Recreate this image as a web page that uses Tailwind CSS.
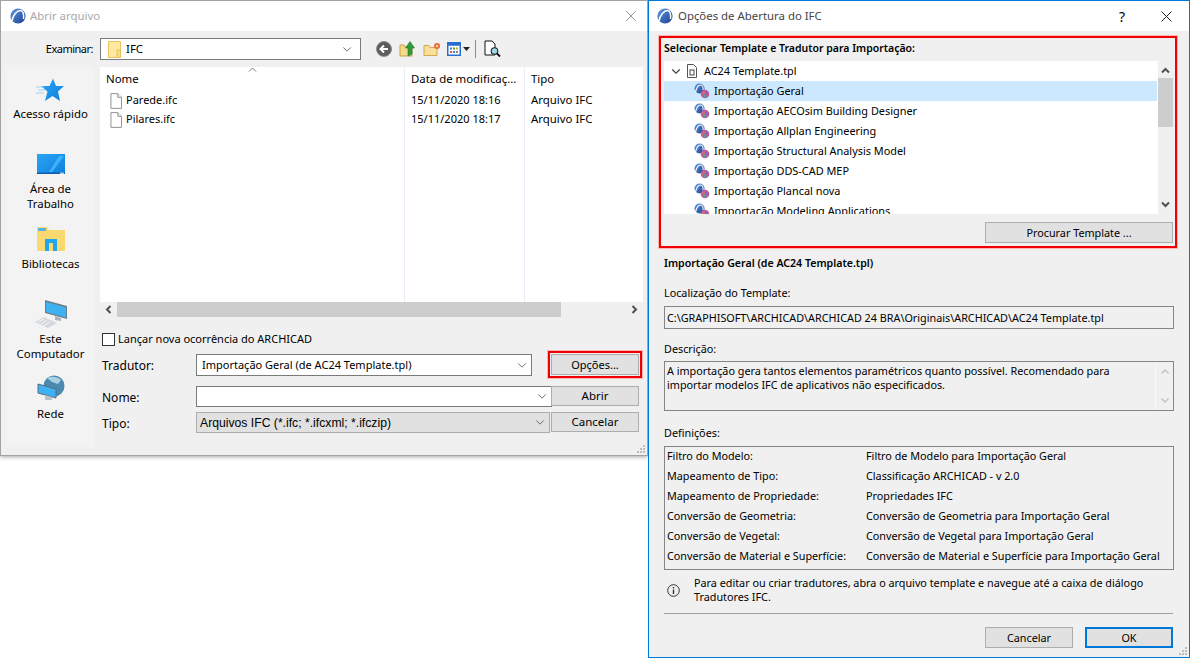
<!DOCTYPE html>
<html><head><meta charset="utf-8">
<script src="https://cdn.jsdelivr.net/npm/@tailwindcss/browser@4"></script>
<title>IFC</title></head>
<body class="relative w-[1190px] h-[658px] overflow-hidden bg-white text-black text-[12px] leading-[15px] font-['Noto_Sans',sans-serif]">
<svg width="0" height="0" class="absolute">
<defs>
<linearGradient id="ac" x1="0" y1="0" x2="1" y2="1"><stop offset="0" stop-color="#5f9ae8"/><stop offset="1" stop-color="#1c3f8c"/></linearGradient>
<linearGradient id="sc" x1="0" y1="0" x2="1" y2="1"><stop offset="0" stop-color="#2aa5f5"/><stop offset="1" stop-color="#0f7fdc"/></linearGradient>
<symbol id="logo" viewBox="0 0 16 16"><circle cx="8" cy="8" r="7.6" fill="url(#ac)"/><path d="M2 13C3 7 7 2.500 10.500 2.500C13 2.500 14 6 13.500 11" fill="none" stroke="#fff" stroke-width="1.500"/></symbol>
<symbol id="tr" viewBox="0 0 16 16"><circle cx="5.500" cy="5.500" r="5" fill="url(#ac)"/><path d="M1.500 9C2.500 5 4.500 2 6.500 2C8.500 2 9.500 4 9 7" fill="none" stroke="#fff" stroke-width="1.100"/><circle cx="11" cy="11" r="4.300" fill="#c05a9a"/><circle cx="9.500" cy="10" r="1.500" fill="#d46a6a"/><circle cx="12.500" cy="10" r="1.500" fill="#7a68c8"/><circle cx="11" cy="13" r="1.500" fill="#3aa7a0"/></symbol>
<symbol id="file" viewBox="0 0 13 17"><path d="M1 .5H8.500L12.500 4.500V16.500H1Z" fill="#fff" stroke="#8a8a8a"/><path d="M8.500 .5V4.500H12.500" fill="#eee" stroke="#8a8a8a"/></symbol>
<symbol id="down" viewBox="0 0 12 8"><path d="M1.500 1.500L6 6L10.500 1.500" fill="none" stroke="#555" stroke-width="1"/></symbol>
</defs></svg>

<!-- Abrir arquivo -->
<section class="absolute left-0 top-0 w-[648px] h-[456px] flex flex-col bg-[#f0f0f0] border border-[#a3a3a3] shadow-[0_1px_4px_rgba(0,0,0,0.35)]">
  <header class="h-[30px] shrink-0 bg-white flex items-center pl-[9px] pr-[10px]">
    <svg class="w-4 h-4"><use href="#logo"/></svg>
    <span class="ml-[4px] mb-[2px] text-[#a8a8a8] text-[11.4px]">Abrir arquivo</span>
    <svg class="ml-auto w-[12px] h-[12px]" viewBox="0 0 12 12"><path d="M1 1L11 11M11 1L1 11" stroke="#999" stroke-width="1" fill="none"/></svg>
  </header>
  <div class="flex items-center h-[22px] mt-[7px]">
    <span class="w-[92px] mb-[2px] text-right text-[11px] tracking-[-0.5px]">Examinar:</span>
    <div class="ml-[7px] w-[261px] h-[22px] bg-white border border-[#7a7a7a] flex items-center pl-[7px] pr-[8px]">
      <svg class="w-[13px] h-[17px]" viewBox="0 0 13 17"><path d="M.5 .5H12.500V16.500H.5Z" fill="#ffe9a0" stroke="#e8c25c"/><path d="M9 9H12.500V16.500H9Z" fill="#fbdc7c" stroke="#e8c25c"/></svg>
      <span class="ml-[5px] mb-[2px] text-[11.5px]">IFC</span>
      <svg class="ml-auto w-[10px] h-[7px]"><use href="#down"/></svg>
    </div>
    <div class="ml-[15px] flex items-center">
      <svg class="w-[16px] h-[16px]" viewBox="0 0 16 16"><circle cx="8" cy="8" r="7.500" fill="#5c5c5c"/><circle cx="8" cy="8" r="7.500" fill="none" stroke="#8c8c8c"/><path d="M12 8H5M8 4.500L4.500 8L8 11.500" fill="none" stroke="#fff" stroke-width="2"/></svg>
      <svg class="ml-[7px] w-[17px] h-[18px]" viewBox="0 0 17 18"><path d="M1 5H5L6 7H13V16H1Z" fill="#f6d98a" stroke="#c9a24a"/><path d="M9 16V8H6.500L11 1.500L15.500 8H13V14Z" fill="#2f9a3a" stroke="#1f7a2a" stroke-width=".6"/></svg>
      <svg class="ml-[7px] w-[18px] h-[15px]" viewBox="0 0 18 15"><path d="M1 3.500H6L7 5.500H14V13.500H1Z" fill="#f8df9c" stroke="#d2a850"/><circle cx="14" cy="4" r="3" fill="#e8693a"/><circle cx="14" cy="4" r="1.200" fill="#ffd9a0"/></svg>
      <svg class="ml-[6px] w-[14px] h-[14px]" viewBox="0 0 14 14"><rect x=".75" y=".75" width="12.500" height="12.500" fill="#fff" stroke="#2a6fd0" stroke-width="1.500"/><rect x=".75" y=".75" width="12.500" height="3" fill="#2a6fd0"/><rect x="3" y="5.500" width="2" height="2" fill="#3a7fd0"/><rect x="6" y="5.500" width="2" height="2" fill="#49a04a"/><rect x="9" y="5.500" width="2" height="2" fill="#e0a030"/><rect x="3" y="9" width="2" height="2" fill="#d05a40"/><rect x="6" y="9" width="2" height="2" fill="#3a7fd0"/><rect x="9" y="9" width="2" height="2" fill="#888"/></svg>
      <svg class="ml-[2px] w-[7px] h-[4px]" viewBox="0 0 7 4"><path d="M0 0H7L3.500 4Z" fill="#222"/></svg>
      <div class="ml-[5px] w-px h-[18px] bg-[#8a8a8a]"></div>
      <svg class="ml-[8px] w-[17px] h-[18px]" viewBox="0 0 17 18"><path d="M1 1H8L11 4V15H1Z" fill="#fff" stroke="#111"/><circle cx="10.500" cy="11" r="3.300" fill="#9fd6e8" stroke="#222" stroke-width="1.100"/><path d="M13 13.500L16 16.500" stroke="#111" stroke-width="1.800"/></svg>
    </div>
  </div>
  <div class="flex mt-[7px] pl-[6px] gap-[6px]">
    <nav class="w-[87px] h-[380px] bg-[#f3f3f3] flex flex-col items-center text-center text-[11.4px]">
      <svg class="mt-[11px] w-[30px] h-[24px]" viewBox="0 0 30 24"><path d="M17 0.500L20 8H28L22 13.500L24 23L16.500 18L9 23L11.500 13.500L5 8H13.500Z" fill="url(#sc)"/><path d="M0 9H8M2 12H9M0 15H8" stroke="#9fd0f5" stroke-width="1"/></svg>
      <span class="mt-[4px]">Acesso rápido</span>
      <svg class="mt-[33px] w-[28px] h-[20px]" viewBox="0 0 28 20"><rect width="28" height="20" fill="url(#sc)"/><path d="M12 18L22 2H27L15 18Z" fill="#3fb2fa"/><rect x="0" y="18.500" width="28" height="1.500" fill="#0a5fae"/><rect x="23" y="18.700" width="4" height="1" fill="#fff"/></svg>
      <span class="mt-[7px]">Área de<br>Trabalho</span>
      <svg class="mt-[16px] w-[28px] h-[24px]" viewBox="0 0 28 24"><path d="M0 0H10L12 3H28V24H0Z" fill="#fbd971"/><rect x="1" y="1" width="8" height="3" fill="#5ab1e8"/><path d="M8 24V12H20V24H16V16H12V24Z" fill="#1ea7ee"/></svg>
      <span class="mt-[5px]">Bibliotecas</span>
      <svg class="mt-[29px] w-[32px] h-[28px]" viewBox="0 0 32 28"><path d="M10 0L32 6V19L10 13Z" fill="#6e7f8c"/><path d="M11 2L31 7.500V17.500L11 12Z" fill="#3db1f2"/><path d="M20 16V20L26 21V18Z" fill="#aab4bc"/><path d="M0 22L9 17L22 23L13 28Z" fill="#d4d8dc"/><path d="M3 22L9 19M6 24L12 20M9 25.500L15 22" stroke="#fff" stroke-width=".8"/></svg>
      <span class="mt-[3px]">Este<br>Computador</span>
      <svg class="mt-[14px] w-[28px] h-[28px]" viewBox="0 0 28 28"><circle cx="17" cy="11" r="10.500" fill="#4a8ab0"/><path d="M10 3C14 1 20 1 24 5L21 9L15 7Z" fill="#a8d0e0"/><path d="M1 9L19 14V23L1 18Z" fill="#3db1f2" stroke="#5b6b78"/><path d="M8 20V25H15V22Z" fill="#b8c2ca"/></svg>
      <span class="mt-[3px]">Rede</span>
    </nav>
    <div class="w-[543px] flex flex-col">
      <div class="relative h-[235px] bg-white flex text-[11.4px]">
        <svg class="absolute left-[148px] top-0 w-[9px] h-[5px]" viewBox="0 0 9 5"><path d="M1 4.500L4.500 1L8 4.500" fill="none" stroke="#777"/></svg>
        <div class="w-[305px] pl-[6px] border-r border-[#e8eef7]">
          <div class="h-[23px] flex items-center">Nome</div>
          <div class="h-[19px] mt-[1px] flex items-center pl-[4px] text-[11px]"><svg class="w-[12px] h-[16px]"><use href="#file"/></svg><span class="ml-[4px] mb-[2px]">Parede.ifc</span></div>
          <div class="h-[19px] flex items-center pl-[4px] text-[11px]"><svg class="w-[12px] h-[16px]"><use href="#file"/></svg><span class="ml-[4px] mb-[2px]">Pilares.ifc</span></div>
        </div>
        <div class="w-[120px] pl-[6px] border-r border-[#e8eef7]">
          <div class="h-[23px] flex items-center whitespace-nowrap">Data de modificaç...</div>
          <div class="h-[19px] flex items-center text-[11px]">15/11/2020 18:16</div>
          <div class="h-[19px] flex items-center text-[11px]">15/11/2020 18:17</div>
        </div>
        <div class="flex-1 pl-[6px]">
          <div class="h-[23px] flex items-center">Tipo</div>
          <div class="h-[19px] flex items-center">Arquivo IFC</div>
          <div class="h-[19px] flex items-center">Arquivo IFC</div>
        </div>
      </div>
      <div class="h-[15px] flex items-center">
        <svg class="w-[17px] h-[15px]" viewBox="0 0 17 15"><path d="M10.500 4L7 7.500L10.500 11" fill="none" stroke="#505050" stroke-width="2"/></svg>
        <div class="w-[444px] h-[15px] bg-[#cdcdcd]"></div>
        <svg class="ml-auto w-[17px] h-[15px]" viewBox="0 0 17 15"><path d="M6.500 4L10 7.500L6.500 11" fill="none" stroke="#505050" stroke-width="2"/></svg>
      </div>
      <label class="flex items-center mt-[16px] ml-[2px] h-[13px] text-[11px]">
        <span class="w-[13px] h-[13px] bg-white border border-[#333]"></span><span class="ml-[3px] mb-[2px]">Lançar nova ocorrência do ARCHICAD</span>
      </label>
      <div class="flex items-start mt-[5px] h-[27px]">
        <span class="w-[96px] pl-[2px] mt-[7px]">Tradutor:</span>
        <div class="mt-[3px] w-[336px] h-[22px] bg-white border border-[#7a7a7a] flex items-center pl-[5px] pr-[4px] text-[11px]"><span class="mb-[2px]">Importação Geral (de AC24 Template.tpl)</span><svg class="ml-auto w-[10px] h-[7px]"><use href="#down"/></svg></div>
        <div class="ml-[16px] w-[94px] h-[27px] border-2 border-[#f00000] shadow-[0_0_0_1px_#ffb4b4] p-[1px]">
          <button class="w-full h-full bg-[#e1e1e1] border border-[#adadad] text-center text-[11px]">Opções...</button>
        </div>
      </div>
      <div class="flex items-start mt-[8px]">
        <span class="w-[96px] pl-[2px] mt-[4px]">Nome:</span>
        <div class="w-[356px] h-[21px] bg-white border border-[#7a7a7a] flex items-center justify-end pr-[4px]"><svg class="w-[10px] h-[7px]"><use href="#down"/></svg></div>
        <button class="-ml-[1px] w-[88px] h-[20px] pb-[2px] bg-[#e1e1e1] border border-[#adadad] text-[11.5px]">Abrir</button>
      </div>
      <div class="flex items-start mt-[5px]">
        <span class="w-[96px] pl-[2px] mt-[4px]">Tipo:</span>
        <div class="w-[354px] h-[21px] bg-[#e1e1e1] border border-[#adadad] flex items-center pl-[3px] pr-[4px] font-['Liberation_Sans',sans-serif] text-[12.2px]"><span class="mt-[2px]">Arquivos IFC (*.ifc; *.ifcxml; *.ifczip)</span><svg class="ml-auto w-[10px] h-[7px]"><use href="#down"/></svg></div>
        <button class="ml-[1px] w-[88px] h-[20px] pb-[2px] bg-[#e1e1e1] border border-[#adadad] text-[11.5px]">Cancelar</button>
      </div>
    </div>
  </div>
  <svg class="absolute right-[2px] bottom-[2px] w-[9px] h-[9px]" viewBox="0 0 9 9"><path d="M7 1h2v2H7zM4 4h2v2H4zM7 4h2v2H7zM1 7h2v2H1zM4 7h2v2H4zM7 7h2v2H7z" fill="#bdbdbd"/></svg>
</section>

<!-- Opções -->
<section class="absolute left-[648px] top-0 w-[542px] h-[658px] flex flex-col bg-[#f0f0f0] border border-[#0078d7] text-[10.8px]">
  <header class="h-[30px] shrink-0 bg-white flex items-center pl-[8px]">
    <svg class="w-4 h-4"><use href="#logo"/></svg>
    <span class="ml-[5px] mb-[2px] text-[#444] text-[11.4px]">Opções de Abertura do IFC</span>
    <span class="ml-auto text-[14px] w-[12px] text-center">?</span>
    <svg class="ml-[33px] mr-[17px] w-[11px] h-[11px]" viewBox="0 0 11 11"><path d="M.5 .5L10.500 10.500M10.500 .5L.5 10.500" stroke="#222" fill="none"/></svg>
  </header>
  <div class="mx-[10px] mt-[5px] w-[518px] h-[212px] border-2 border-[#f00000] shadow-[0_0_0_1px_#ffb4b4] pt-[3px] pl-[3px] flex flex-col">
    <h2 class="font-semibold h-[15px] text-[10.5px] leading-[15px]">Selecionar Template e Tradutor para Importação:</h2>
    <div class="mt-[5px] flex h-[153px]">
      <div class="w-[494px] bg-white overflow-hidden text-[10.9px]">
        <div class="h-[20px] flex items-center pl-[7px]">
          <svg class="w-[10px] h-[7px]" viewBox="0 0 12 8"><path d="M1.500 1.500L6 6L10.500 1.500" fill="none" stroke="#444" stroke-width="1.600"/></svg>
          <svg class="ml-[6px] w-[10px] h-[14px]" viewBox="0 0 10 14"><path d="M.5 .5H6.500L9.500 3.500V13.500H.5Z" fill="#fff" stroke="#555"/><rect x="3" y="6" width="4" height="5" fill="none" stroke="#444"/></svg>
          <span class="ml-[7px] mb-[2px]">AC24 Template.tpl</span>
        </div>
        <div class="h-[20px] w-[493px] bg-[#cce8ff] flex items-center pl-[30px]"><svg class="w-4 h-4"><use href="#tr"/></svg><span class="ml-[4px] mb-[2px]">Importação Geral</span></div>
        <div class="h-[20px] flex items-center pl-[30px]"><svg class="w-4 h-4"><use href="#tr"/></svg><span class="ml-[4px] mb-[2px]">Importação AECOsim Building Designer</span></div>
        <div class="h-[20px] flex items-center pl-[30px]"><svg class="w-4 h-4"><use href="#tr"/></svg><span class="ml-[4px] mb-[2px]">Importação Allplan Engineering</span></div>
        <div class="h-[20px] flex items-center pl-[30px]"><svg class="w-4 h-4"><use href="#tr"/></svg><span class="ml-[4px] mb-[2px]">Importação Structural Analysis Model</span></div>
        <div class="h-[20px] flex items-center pl-[30px]"><svg class="w-4 h-4"><use href="#tr"/></svg><span class="ml-[4px] mb-[2px]">Importação DDS-CAD MEP</span></div>
        <div class="h-[20px] flex items-center pl-[30px]"><svg class="w-4 h-4"><use href="#tr"/></svg><span class="ml-[4px] mb-[2px]">Importação Plancal nova</span></div>
        <div class="h-[20px] flex items-center pl-[30px]"><svg class="w-4 h-4"><use href="#tr"/></svg><span class="ml-[4px] mb-[2px]">Importação Modeling Applications</span></div>
      </div>
      <div class="w-[15px] flex flex-col items-center">
        <svg class="mt-[6px] w-[9px] h-[7px]" viewBox="0 0 9 7"><path d="M1 5.500L4.500 2L8 5.500" fill="none" stroke="#505050" stroke-width="2"/></svg>
        <div class="mt-[4px] w-[15px] h-[49px] bg-[#cdcdcd]"></div>
        <svg class="mt-auto mb-[6px] w-[9px] h-[7px]" viewBox="0 0 9 7"><path d="M1 1.500L4.500 5L8 1.500" fill="none" stroke="#505050" stroke-width="2"/></svg>
      </div>
    </div>
    <button class="mt-[8px] ml-[321px] w-[188px] h-[21px] bg-[#e1e1e1] border border-[#adadad]">Procurar Template ...</button>
  </div>
  <div class="mx-[15px] mt-[8px] w-[510px]">
    <p class="font-semibold text-[10.6px] h-[15px]">Importação Geral (de AC24 Template.tpl)</p>
    <p class="mt-[14px] h-[15px]">Localização do Template:</p>
    <div class="mt-[6px] h-[23px] border border-[#858585] flex items-center pl-[2px]">C:\GRAPHISOFT\ARCHICAD\ARCHICAD 24 BRA\Originais\ARCHICAD\AC24 Template.tpl</div>
    <p class="mt-[12px] h-[15px]">Descrição:</p>
    <div class="mt-[5px] h-[50px] border border-[#858585] flex">
      <p class="flex-1 pl-[2px] pt-[2px] leading-[14px]">A importação gera tantos elementos paramétricos quanto possível. Recomendado para<br>importar modelos IFC de aplicativos não especificados.</p>
      <div class="w-[18px] border-l border-[#f8f8f8] flex flex-col items-center justify-between py-[7px]">
        <svg class="w-[8px] h-[5px]" viewBox="0 0 8 5"><path d="M.5 4.500L4 1L7.500 4.500" fill="none" stroke="#c4c4c4" stroke-width="1.500"/></svg>
        <svg class="w-[8px] h-[5px]" viewBox="0 0 8 5"><path d="M.5 .5L4 4L7.500 .5" fill="none" stroke="#c4c4c4" stroke-width="1.500"/></svg>
      </div>
    </div>
    <p class="mt-[14px] h-[15px]">Definições:</p>
    <div class="mt-[6px] h-[124px] border border-[#858585] grid grid-cols-[199px_1fr] auto-rows-[20px] pl-[2px] items-start leading-[17px]">
      <span>Filtro do Modelo:</span><span>Filtro de Modelo para Importação Geral</span>
      <span>Mapeamento de Tipo:</span><span>Classificação ARCHICAD - v 2.0</span>
      <span>Mapeamento de Propriedade:</span><span>Propriedades IFC</span>
      <span>Conversão de Geometria:</span><span>Conversão de Geometria para Importação Geral</span>
      <span>Conversão de Vegetal:</span><span>Conversão de Vegetal para Importação Geral</span>
      <span>Conversão de Material e Superfície:</span><span>Conversão de Material e Superfície para Importação Geral</span>
    </div>
    <div class="mt-[6px] flex items-center h-[28px]">
      <svg class="ml-[3px] w-[13px] h-[13px]" viewBox="0 0 13 13"><circle cx="6.500" cy="6.500" r="5.800" fill="none" stroke="#333"/><path d="M6.500 5.500V10" stroke="#333" stroke-width="1.400"/><rect x="5.800" y="3" width="1.400" height="1.400" fill="#333"/></svg>
      <p class="ml-[14px] leading-[14px]">Para editar ou criar tradutores, abra o arquivo template e navegue até a caixa de diálogo<br>Tradutores IFC.</p>
    </div>
    <div class="mt-[9px] w-[509px] h-px bg-[#a0a0a0]"></div>
    <div class="mt-[13px] flex justify-end gap-[12px] w-[509px]">
      <button class="w-[88px] h-[21px] bg-[#e1e1e1] border border-[#adadad]">Cancelar</button>
      <button class="w-[88px] h-[21px] bg-[#e1e1e1] border-2 border-[#0078d7]">OK</button>
    </div>
  </div>
  <svg class="absolute right-[2px] bottom-[2px] w-[9px] h-[9px]" viewBox="0 0 9 9"><path d="M7 1h2v2H7zM4 4h2v2H4zM7 4h2v2H7zM1 7h2v2H1zM4 7h2v2H4zM7 7h2v2H7z" fill="#bdbdbd"/></svg>
</section>
</body></html>
